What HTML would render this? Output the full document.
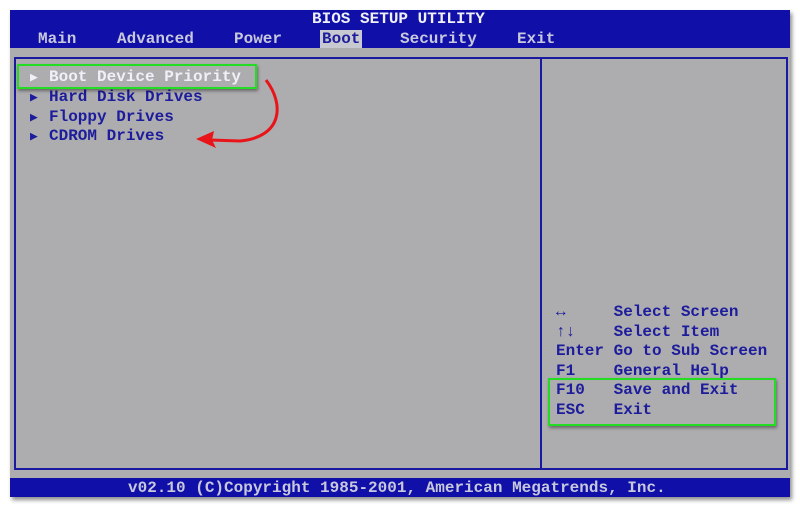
<!DOCTYPE html>
<html><head><style>
body{margin:0;width:800px;height:507px;background:#fff;position:relative;overflow:hidden;font-family:"Liberation Mono",monospace;font-weight:bold;font-size:16px}
.a{position:absolute;white-space:pre;line-height:18px}
#frame{position:absolute;left:10px;top:10px;width:780px;height:487px;background:#adacae;box-shadow:2px 3px 4px rgba(0,0,0,.45)}
#top{position:absolute;left:10px;top:10px;width:780px;height:38px;background:#1010a8}
#bot{position:absolute;left:10px;top:478px;width:780px;height:19px;background:#1010a8}
#box{position:absolute;left:14px;top:57px;width:770px;height:409px;border:2px solid #1a1aa0}
#div{position:absolute;left:540px;top:57px;width:2px;height:411px;background:#1a1aa0}
.w{color:#f0f0f8}.m{color:#c8c8dc}.b{color:#1c1c9c}
.g{position:absolute;border:2px solid #22dd22;box-shadow:1px 2px 3px rgba(0,0,0,.4)}
.t{font-size:13px;display:inline-block;width:19px}
</style></head><body>
<div id="frame"></div><div id="top"></div><div id="bot"></div>
<div id="box"></div><div id="div"></div>
<div class="a w" style="left:312px;top:10px">BIOS SETUP UTILITY</div>
<div style="position:absolute;left:320px;top:30px;width:42px;height:18px;background:#c8c8d0"></div>
<div class="a m" style="left:38px;top:30px">Main</div>
<div class="a m" style="left:117px;top:30px">Advanced</div>
<div class="a m" style="left:234px;top:30px">Power</div>
<div class="a b" style="left:322px;top:30px">Boot</div>
<div class="a m" style="left:400px;top:30px">Security</div>
<div class="a m" style="left:517px;top:30px">Exit</div>
<div class="a w" style="left:30px;top:68px"><span class="t">▶</span>Boot Device Priority</div>
<div class="a b" style="left:30px;top:88px;line-height:19.5px"><span class="t">▶</span>Hard Disk Drives
<span class="t">▶</span>Floppy Drives
<span class="t">▶</span>CDROM Drives</div>
<div class="g" style="left:17px;top:64px;width:236px;height:21px"></div>
<div class="a b" style="left:556px;top:303px;line-height:19.5px">↔     Select Screen
↑↓    Select Item
Enter Go to Sub Screen
F1    General Help
F10   Save and Exit
ESC   Exit</div>
<div class="g" style="left:548px;top:378px;width:224px;height:44px"></div>
<div class="a m" style="left:128px;top:479px">v02.10 (C)Copyright 1985-2001, American Megatrends, Inc.</div>
<svg style="position:absolute;left:190px;top:75px" width="100" height="75">
<path d="M76 5 C95 30 92 62 50 66 L20 65" fill="none" stroke="#e8141a" stroke-width="3"/>
<path d="M6 64 L24 56 L22 65 L26 73 Z" fill="#e8141a"/>
</svg>
</body></html>
